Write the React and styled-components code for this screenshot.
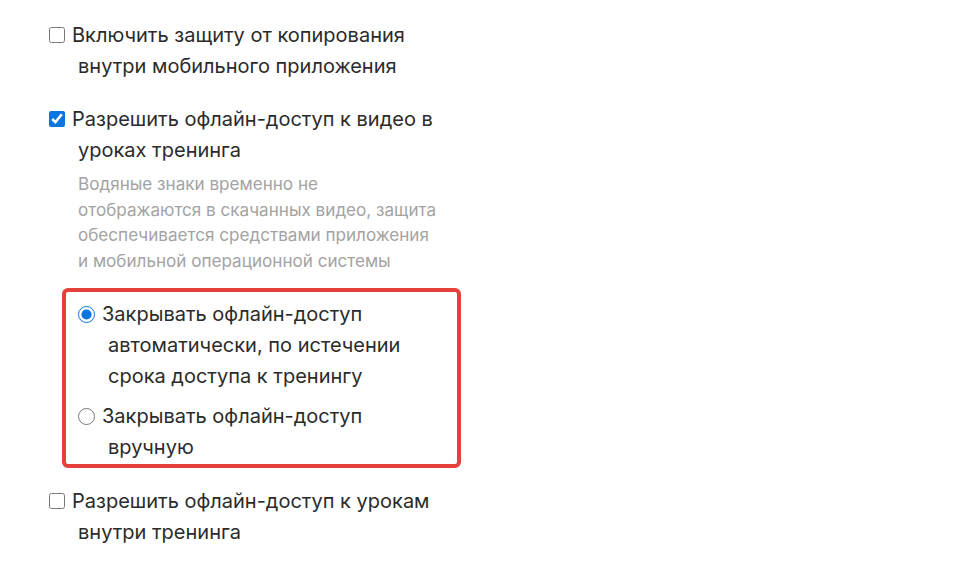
import React from "react";
import styled, { createGlobalStyle } from "styled-components";

const Global = createGlobalStyle`
  html, body { margin: 0; padding: 0; background: #fff; }
  body { font-family: Inter, "Noto Sans", sans-serif; color: #2b2b2b; }
`;

const Page = styled.div`
  padding: 20px 0 0 49px;
  width: 420px;
`;

const Option = styled.div`
  margin-bottom: ${(p) => p.$gap ?? 22}px;
`;

const Label = styled.label`
  display: block;
  font-size: 20px;
  line-height: 31px;
  padding-left: 29px;
  text-indent: -29px;
  color: #2b2b2b;
  cursor: pointer;
`;

const Check = styled.input`
  width: 16px;
  height: 16px;
  margin: 0 7px 0 0;
  vertical-align: -1px;
  accent-color: #0b75e0;
`;

const Hint = styled.div`
  margin: 5px 0 0 29px;
  font-size: 17.1px;
  line-height: 25.7px;
  color: #a3a3a3;
  width: 363px;
`;

const Group = styled.div`
  margin: 14px 0 18px 13px;
  border: 4px solid #e5403a;
  border-radius: 6px;
  padding: 7px 0 1px 12px;
  width: 379px;
  display: flex;
  flex-direction: column;
  gap: 9px;
`;

const Radio = styled(Check).attrs({ type: "radio" })`
  width: 17px;
  height: 17px;
  margin-right: 7px;
  vertical-align: -2px;
`;

const RadioLabel = styled(Label)`
  max-width: 310px;
  padding-left: 30px;
  text-indent: -30px;
`;

export default function App() {
  return (
    <>
      <Global />
      <Page>
        <Option>
          <Label>
            <Check type="checkbox" />
            Включить защиту от копирования внутри мобильного приложения
          </Label>
        </Option>
        <Option $gap={0}>
          <Label>
            <Check type="checkbox" defaultChecked />
            Разрешить офлайн-доступ к видео в уроках тренинга
          </Label>
          <Hint>
            Водяные знаки временно не отображаются в скачанных видео, защита
            обеспечивается средствами приложения и мобильной операционной системы
          </Hint>
        </Option>
        <Group>
          <RadioLabel>
            <Radio name="close" defaultChecked />
            Закрывать офлайн-доступ автоматически, по истечении срока доступа к тренингу
          </RadioLabel>
          <RadioLabel>
            <Radio name="close" />
            Закрывать офлайн-доступ вручную
          </RadioLabel>
        </Group>
        <Option>
          <Label>
            <Check type="checkbox" />
            Разрешить офлайн-доступ к урокам внутри тренинга
          </Label>
        </Option>
      </Page>
    </>
  );
}
